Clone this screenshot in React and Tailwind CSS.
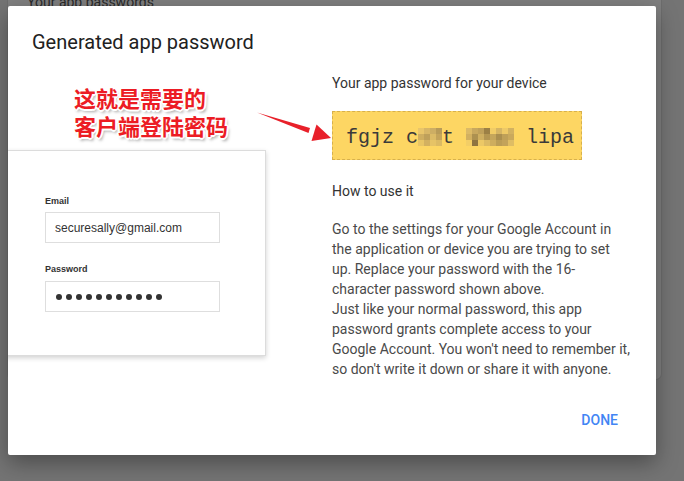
import React from "react"

const mosaic = {
  a: ["#e9c56a", "#d8b666", "#cfae60", "#bfa05a", "#e8c565", "#d3b160"],
  b: ["#cdae64", "#b89b58", "#dcbb66", "#c4a45b", "#e6c366", "#dcba63"],
  c: ["#dcba66", "#c8a85e", "#d2b060", "#ad9150", "#f3ce66", "#8f7440"],
  d: ["#bfa05a", "#9c8045", "#cfaf60", "#b49652", "#ecc866", "#dcba63"],
  e: ["#f1cc66", "#d6b563", "#c5a65b", "#ab8f4f", "#cead5e", "#bb9d56"],
  f: ["#eec966", "#d3b260", "#bfa058", "#caa95c", "#c3a35a", "#dfbd64"],
}

// "fgjz c??t ???? lipa" — the blurred characters are drawn as pixel blocks
const password = ["f", "g", "j", "z", " ", "c", "#a", "#b", "t", " ", "#c", "#d", "#e", "#f", " ", "l", "i", "p", "a"]

function Mosaic({ colors }) {
  return (
    <span className="grid grid-cols-2 w-[12px] h-[18px] mt-[2px]">
      {colors.map((c, i) => (
        <span key={i} className="block w-[6px] h-[6px]" style={{ backgroundColor: c }} />
      ))}
    </span>
  )
}

function LoginCard() {
  return (
    <div className="-ml-[4px] mt-[11px] w-[262px] h-[206px] bg-white border border-[#dcdcdc] shadow-[0_2px_5px_rgba(0,0,0,0.18)] pl-[40px] pt-[44px] font-['Liberation_Sans',Arial,sans-serif] text-[#333]">
      <div className="text-[9px] font-bold leading-[12px]">Email</div>
      <div className="mt-[5px] w-[175px] h-[31px] border border-[#dedede] flex items-center pl-[9px] text-[12px]">
        securesally@gmail.com
      </div>
      <div className="mt-[20px] text-[9px] font-bold leading-[12px]">Password</div>
      <div className="mt-[6px] w-[175px] h-[31px] border border-[#dedede] flex items-center pl-[10px] gap-[4px]">
        {Array.from({ length: 11 }).map((_, i) => (
          <span key={i} className="block w-[6px] h-[6px] rounded-full bg-[#333]" />
        ))}
      </div>
    </div>
  )
}

export default function App() {
  const redText =
    "[text-shadow:1px_1px_0_#fff,-1px_-1px_0_#fff,1px_-1px_0_#fff,-1px_1px_0_#fff,2px_0_0_#fff,-2px_0_0_#fff,0_2px_0_#fff,0_-2px_0_#fff,2px_3px_3px_rgba(0,0,0,0.35)]"

  return (
    <div className="relative w-[684px] h-[481px] overflow-hidden bg-[#747474] font-['Roboto',sans-serif]">
      {/* page under the overlay */}
      <div className="ml-[7px] -mt-[9px] w-[655px] h-[389px] bg-[#7f7f7f] border border-[#6d6d6d] rounded-b-[6px] pl-[19px] text-[14px] leading-[20px] text-[#2a2a2a]">
        Your app passwords
      </div>

      <div className="absolute left-[8px] top-[6px] w-[648px] h-[449px] bg-white rounded-[2px] shadow-[0_8px_22px_rgba(0,0,0,0.35)] overflow-hidden flex flex-col">
        <div className="pt-[22px] pl-[24px] text-[20px] leading-[28px] text-[#212121]">Generated app password</div>

        <div className="flex">
          <div className="w-[324px] shrink-0">
            <div
              className={`mt-[27px] pl-[66px] text-[22px] leading-[28px] font-bold text-[#ec1c24] font-['Noto_Sans_CJK_SC',sans-serif] ${redText}`}
            >
              <div>这就是需要的</div>
              <div>客户端登陆密码</div>
            </div>
            <LoginCard />
          </div>

          <div className="pt-[17px] text-[14px] leading-[20px]">
            <div className="text-[#333]">Your app password for your device</div>
            <div className="mt-[18px] w-[250px] h-[49px] bg-[#fdd663] border border-dashed border-[#d7b04c] flex items-center pl-[13px] font-['Liberation_Mono','Courier_New',monospace] text-[20px] text-[#3a3a3a]">
              {password.map((ch, i) =>
                ch.startsWith("#") ? (
                  <Mosaic key={i} colors={mosaic[ch.slice(1)]} />
                ) : (
                  <span key={i} className="w-[12px] text-center leading-[24px] mt-[4px]">
                    {ch === " " ? "\u00a0" : ch}
                  </span>
                )
              )}
            </div>
            <div className="mt-[21px] text-[#333]">How to use it</div>
            <div className="mt-[18px] text-[#4a4a4a] whitespace-nowrap">
              <div>Go to the settings for your Google Account in</div>
              <div>the application or device you are trying to set</div>
              <div>up. Replace your password with the 16-</div>
              <div>character password shown above.</div>
              <div>Just like your normal password, this app</div>
              <div>password grants complete access to your</div>
              <div>Google Account. You won't need to remember it,</div>
              <div>so don't write it down or share it with anyone.</div>
            </div>
          </div>
        </div>

        <div className="mt-auto flex justify-end pr-[30px] pb-[17px]">
          <button className="h-[36px] px-2 text-[14px] font-medium text-[#4285f4] uppercase">Done</button>
        </div>

        <svg className="absolute left-[246px] top-[102px]" width="80" height="36" viewBox="246 102 80 36">
          <path d="M249 106.5 L302 122 L300.5 127 Z" fill="#e8202a" />
          <path d="M323 132 L308.5 118.5 L303.5 135 Z" fill="#e8202a" />
        </svg>
      </div>
    </div>
  )
}
